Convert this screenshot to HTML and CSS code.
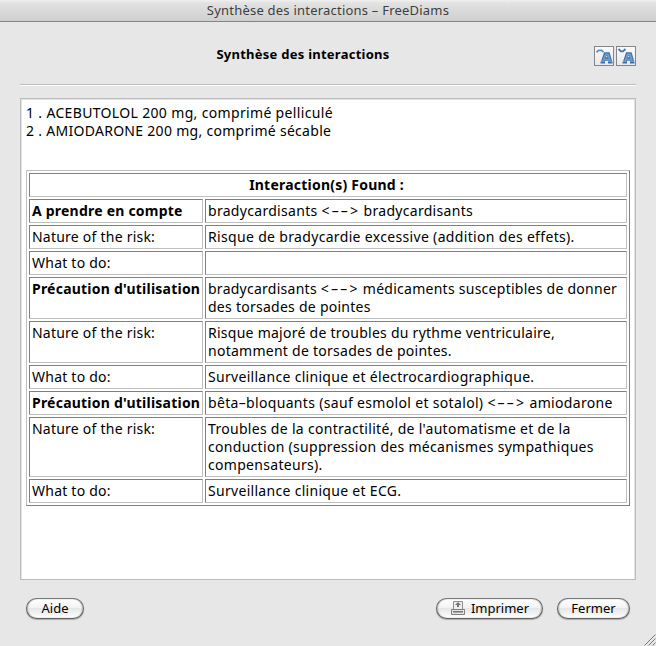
FILE: index.html
```html
<!DOCTYPE html>
<html lang="fr">
<head>
<meta charset="utf-8">
<title>Synthèse des interactions - FreeDiams</title>
<link rel="stylesheet" href="styles.css">
</head>
<body>
<div class="window">
  <header class="titlebar">Synthèse des interactions – FreeDiams</header>
  <div class="heading">
    <h1>Synthèse des interactions</h1>
    <div class="tools">
      <button class="tool" aria-label="Agrandir le texte">
        <svg width="18" height="18" viewBox="0 0 18 18" fill="none"><path d="M1.500 5.300 3.500 3.300H6.500L8.500 5" stroke="#5a90ca" stroke-width="1.800"/><path d="M7.800 14.500 10.300 7h3l2.200 7.500M9 12h5" stroke="#47719f" stroke-width="3.400"/><path d="M5.500 15.500h4.500M13 15.500h4.500" stroke="#3e6ea8" stroke-width="2"/><path d="M8 14.500 10.700 7.300h2.300L15.300 14.500M9 12.500h5" stroke="#6c9cd4" stroke-width="1.700"/></svg>
      </button>
      <button class="tool" aria-label="Réduire le texte">
        <svg width="18" height="18" viewBox="0 0 18 18" fill="none"><path d="M1.500 2 4 4.300H6L8.500 2" stroke="#3b77ba" stroke-width="1.800"/><path d="M7.800 14.500 10.300 7h3l2.200 7.500M9 12h5" stroke="#47719f" stroke-width="3.400"/><path d="M5.500 15.500h4.500M13 15.500h4.500" stroke="#3e6ea8" stroke-width="2"/><path d="M8 14.500 10.700 7.300h2.300L15.300 14.500M9 12.500h5" stroke="#6c9cd4" stroke-width="1.700"/></svg>
      </button>
    </div>
  </div>
  <main class="panel">
    <div class="drugs">
      <div class="d1">1 . ACEBUTOLOL 200 mg, comprimé pelliculé</div>
      <div class="d2">2 . AMIODARONE 200 mg, comprimé sécable</div>
    </div>
    <table class="report">
      <colgroup><col class="label-col"><col></colgroup>
      <tr><th class="found" colspan="2">Interaction(s) Found :</th></tr>
      <tr><th>A prendre en compte</th><td>bradycardisants <span class="arrow">&lt;––&gt;</span> bradycardisants</td></tr>
      <tr><td class="label">Nature of the risk:</td><td class="looser">Risque de bradycardie excessive (addition des effets).</td></tr>
      <tr><td class="label">What to do:</td><td></td></tr>
      <tr><th>Précaution d'utilisation</th><td class="tight">bradycardisants <span class="arrow">&lt;––&gt;</span> médicaments susceptibles de donner<br>des torsades de pointes</td></tr>
      <tr><td class="label">Nature of the risk:</td><td class="tight">Risque majoré de troubles du rythme ventriculaire,<br>notamment de torsades de pointes.</td></tr>
      <tr><td class="label">What to do:</td><td>Surveillance clinique et électrocardiographique.</td></tr>
      <tr><th>Précaution d'utilisation</th><td class="looser">bêta–bloquants (sauf esmolol et sotalol) <span class="arrow">&lt;––&gt;</span> amiodarone</td></tr>
      <tr><td class="label">Nature of the risk:</td><td>Troubles de la contractilité, de l'automatisme et de la<br>conduction (suppression des mécanismes sympathiques<br>compensateurs).</td></tr>
      <tr><td class="label">What to do:</td><td>Surveillance clinique et ECG.</td></tr>
    </table>
  </main>
  <footer class="actions">
    <button class="btn help">Aide</button>
    <button class="btn print"><svg width="16" height="16" viewBox="0 0 16 16"><path d="M3.500 9V1.500h9V9" fill="#eee" stroke="#909090"/><path d="M8 2 5 5h2v2h2V5h2z" fill="#777"/><path d="M1.500 9.500h13v5h-13z" fill="#e4e4e4" stroke="#808080"/><path d="M3 11.800h10" stroke="#666" stroke-width="1.300"/></svg><span>Imprimer</span></button>
    <button class="btn close">Fermer</button>
  </footer>
  <svg class="grip" width="12" height="12" viewBox="0 0 12 12" stroke="#777"><path d="M.5 11.500 11.500.5M4.500 11.500l7-7M8.500 11.500l3-3"/></svg>
</div>
</body>
</html>
```
FILE: styles.css
```css
* { box-sizing: border-box; }
body { margin: 0; font-family: "Noto Sans", sans-serif; color: #000; }
.window { position: relative; width: 656px; height: 646px; background: #e7e7e7; overflow: hidden; }
.titlebar { height: 22px; border-bottom: 1px solid #858585; background: linear-gradient(#f0f0f0, #e2e2e2 15%, #cfcfcf); text-align: center; font-size: 13px; line-height: 21px; color: #3e3e3e; letter-spacing: .22px; }
.heading { position: relative; height: 64px; margin: 0 20px; padding-right: 50px; border-bottom: 1px solid #fff; box-shadow: inset 0 -1px #bcbcbc; }
h1 { margin: 0; padding-top: 22px; font-size: 13px; line-height: 20px; text-align: center; letter-spacing: .25px; }
.tools { position: absolute; right: 0; top: 24px; display: flex; gap: 2px; }
.tool { width: 20px; height: 20px; padding: 0; border: 1px solid #858585; background: linear-gradient(#fafafa, #e9e9e9); }
.tool svg { display: block; }
.panel { height: 482px; margin: 12px 20px 0; padding: 4px; border: 1px solid #bdbdbd; box-shadow: inset 1px 1px #e3e3e3, inset -1px 0 #e3e3e3; background: #fff; font-size: 14px; line-height: 18px; white-space: nowrap; }
.drugs { padding-left: 1px; margin: 1px 0 30px; }
.d1 { letter-spacing: .34px; }
.d2 { letter-spacing: .29px; }
.report { width: 604px; margin-left: 1px; table-layout: fixed; border-collapse: separate; border-spacing: 2px; border: 1px solid; border-color: #bfbfbf #808080 #808080 #bfbfbf; }
.label-col { width: 174px; }
.report th, .report td { height: 24px; padding: 2px; border: 1px solid; border-color: #808080 #bfbfbf #bfbfbf #808080; text-align: left; vertical-align: top; }
.report th { letter-spacing: .22px; }
.report td { letter-spacing: .3px; }
.report .label { letter-spacing: .23px; }
.report .tight { letter-spacing: .26px; }
.report .looser { letter-spacing: .33px; }
.arrow { letter-spacing: 2.2px; margin-right: -.7px; }
.report .found { text-align: center; padding-right: 5px; }
.actions { display: flex; gap: 14px; margin: 18px 26px 0; }
.btn { display: flex; align-items: center; justify-content: center; gap: 5px; height: 21px; padding: 0 0 2px; border: 1px solid #6e6e6e; border-top-color: #858585; border-radius: 11px; outline: 1px solid rgba(0,0,0,.1); outline-offset: -1px; background: linear-gradient(#fff, #f3f3f3 45%, #e6e6e6 50%, #fff); box-shadow: inset 1px 0 1px #bbb, inset -1px 0 1px #bbb, 0 1px 1px #aaa; font: 13px "Noto Sans", sans-serif; color: #000; }
.help { width: 58px; margin-right: auto; }
.print { width: 107px; }
.print svg { margin-top: 1px; }
.close { width: 73px; }
.grip { position: absolute; right: 0; bottom: 0; }
```
